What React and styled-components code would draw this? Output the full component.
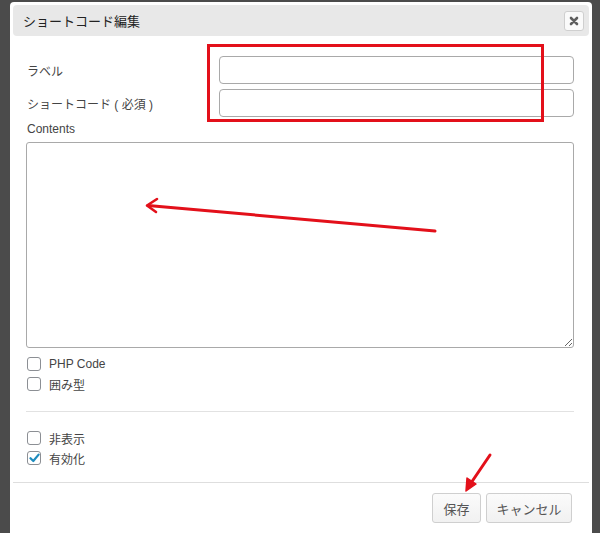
import React from "react";
import styled, { createGlobalStyle } from "styled-components";

const Global = createGlobalStyle`
  html, body { margin: 0; padding: 0; }
  body {
    background: #4b4b4b;
    font-family: "Liberation Sans", "Noto Sans CJK JP", Arial, sans-serif;
    color: #333;
  }
`;

const Overlay = styled.div`
  position: relative;
  width: 600px;
  height: 533px;
  overflow: hidden;
  background: #4b4b4b;
  padding: 2px 0 0 10px;
  box-sizing: border-box;
`;

const Dialog = styled.div`
  width: 582px;
  height: 540px;
  background: #fff;
  border-radius: 4px;
  padding: 3px 3px 0;
  box-sizing: border-box;
  display: flex;
  flex-direction: column;
`;

const TitleBar = styled.div`
  height: 31px;
  background: #e8e8e8;
  border-radius: 4px;
  display: flex;
  align-items: center;
  justify-content: space-between;
  padding: 0 5px 0 10px;
  flex-shrink: 0;
`;

const Title = styled.span`
  font-size: 13px;
  font-weight: 400;
  color: #222;
  font-family: "Noto Sans CJK JP", sans-serif;
`;

const CloseButton = styled.button`
  width: 20px;
  height: 20px;
  padding: 0;
  border: 1px solid #cfcfcf;
  border-radius: 3px;
  background: #fafafa;
  display: flex;
  align-items: center;
  justify-content: center;
`;

const Body = styled.div`
  padding: 20px 15px 0 13px;
  display: flex;
  flex-direction: column;
`;

const FieldGrid = styled.div`
  display: grid;
  grid-template-columns: 193px 1fr;
  row-gap: 5px;
  align-items: center;
`;

const Label = styled.label`
  font-size: 12px;
  color: #444;
  padding-left: 1px;
  font-family: "Liberation Sans", "Noto Sans CJK JP", sans-serif;
`;

const TextInput = styled.input`
  height: 28px;
  box-sizing: border-box;
  border: 1px solid #a9a9a9;
  border-radius: 4px;
  background: #fff;
  width: 100%;
`;

const ContentsLabel = styled(Label)`
  display: block;
  margin-top: 5px;
  line-height: 14px;
`;

const TextArea = styled.textarea`
  margin-top: 6px;
  width: 100%;
  height: 206px;
  box-sizing: border-box;
  border: 1px solid #a9a9a9;
  border-radius: 3px;
  resize: vertical;
  display: block;
`;

const CheckGroup = styled.div`
  display: flex;
  flex-direction: column;
  gap: 6px;
  margin-top: ${(p) => p.$top}px;
  padding-left: 1px;
`;

const CheckRow = styled.label`
  display: flex;
  align-items: center;
  gap: 8px;
  font-size: 12px;
  color: #444;
  height: 14px;
  font-family: "Liberation Sans", "Noto Sans CJK JP", sans-serif;
`;

const Box = styled.span`
  width: 14px;
  height: 14px;
  box-sizing: border-box;
  border: 1px solid #8c8f94;
  border-radius: 3px;
  background: #fff;
  display: flex;
  align-items: center;
  justify-content: center;
`;

const Divider = styled.hr`
  border: none;
  border-top: 1px solid #e2e2e2;
  margin: 20px 0 0;
  width: 100%;
`;

const Footer = styled.div`
  margin-top: 17px;
  border-top: 1px solid #dedede;
  display: flex;
  justify-content: flex-end;
  gap: 5px;
  padding: 10px 17px 0 0;
`;

const Button = styled.button`
  height: 30px;
  width: ${(p) => p.$w}px;
  box-sizing: border-box;
  border: 1px solid #cfcfcf;
  border-radius: 3px;
  background: linear-gradient(#fbfbfb, #f1f1f1);
  color: #555;
  font-size: 13px;
  font-family: "Noto Sans CJK JP", sans-serif;
  padding: 0;
`;

const Annotations = styled.svg`
  position: absolute;
  left: 0;
  top: 0;
  pointer-events: none;
`;

function Check({ label, checked }) {
  return (
    <CheckRow>
      <Box>
        {checked && (
          <svg width="11" height="10" viewBox="0 0 11 10">
            <path d="M1.5 5.2 L4.3 8 L9.6 1.6" fill="none" stroke="#1e8cbe" strokeWidth="2.2" strokeLinecap="round" strokeLinejoin="round" />
          </svg>
        )}
      </Box>
      {label}
    </CheckRow>
  );
}

export default function App() {
  return (
    <>
      <Global />
      <Overlay>
        <Dialog>
          <TitleBar>
            <Title>ショートコード編集</Title>
            <CloseButton aria-label="close">
              <svg width="10" height="10" viewBox="0 0 10 10">
                <path d="M2 2 L8 8 M8 2 L2 8" stroke="#5f5f5f" strokeWidth="2.6" strokeLinecap="round" />
              </svg>
            </CloseButton>
          </TitleBar>
          <Body>
            <FieldGrid>
              <Label>ラベル</Label>
              <TextInput />
              <Label>ショートコード ( 必須 )</Label>
              <TextInput />
            </FieldGrid>
            <ContentsLabel>Contents</ContentsLabel>
            <TextArea />
            <CheckGroup $top={9}>
              <Check label="PHP Code" />
              <Check label="囲み型" />
            </CheckGroup>
            <Divider />
            <CheckGroup $top={19}>
              <Check label="非表示" />
              <Check label="有効化" checked />
            </CheckGroup>
          </Body>
          <Footer>
            <Button $w={49}>保存</Button>
            <Button $w={86}>キャンセル</Button>
          </Footer>
        </Dialog>
        <Annotations width="600" height="533" viewBox="0 0 600 533">
          <rect x="208.5" y="45.5" width="334" height="75" fill="none" stroke="#e3101a" strokeWidth="3" />
          <path d="M435 231 L148 205.5" stroke="#e3101a" strokeWidth="3" strokeLinecap="round" />
          <path d="M157 199 L147 205.5 L156 212" fill="none" stroke="#e3101a" strokeWidth="2.6" strokeLinecap="round" strokeLinejoin="round" />
          <path d="M490 455 L471 483" stroke="#e3101a" strokeWidth="3" strokeLinecap="round" />
          <path d="M466 491 L467 478 L476 484 Z" fill="#e3101a" stroke="#e3101a" strokeWidth="1.5" strokeLinejoin="round" />
        </Annotations>
      </Overlay>
    </>
  );
}
